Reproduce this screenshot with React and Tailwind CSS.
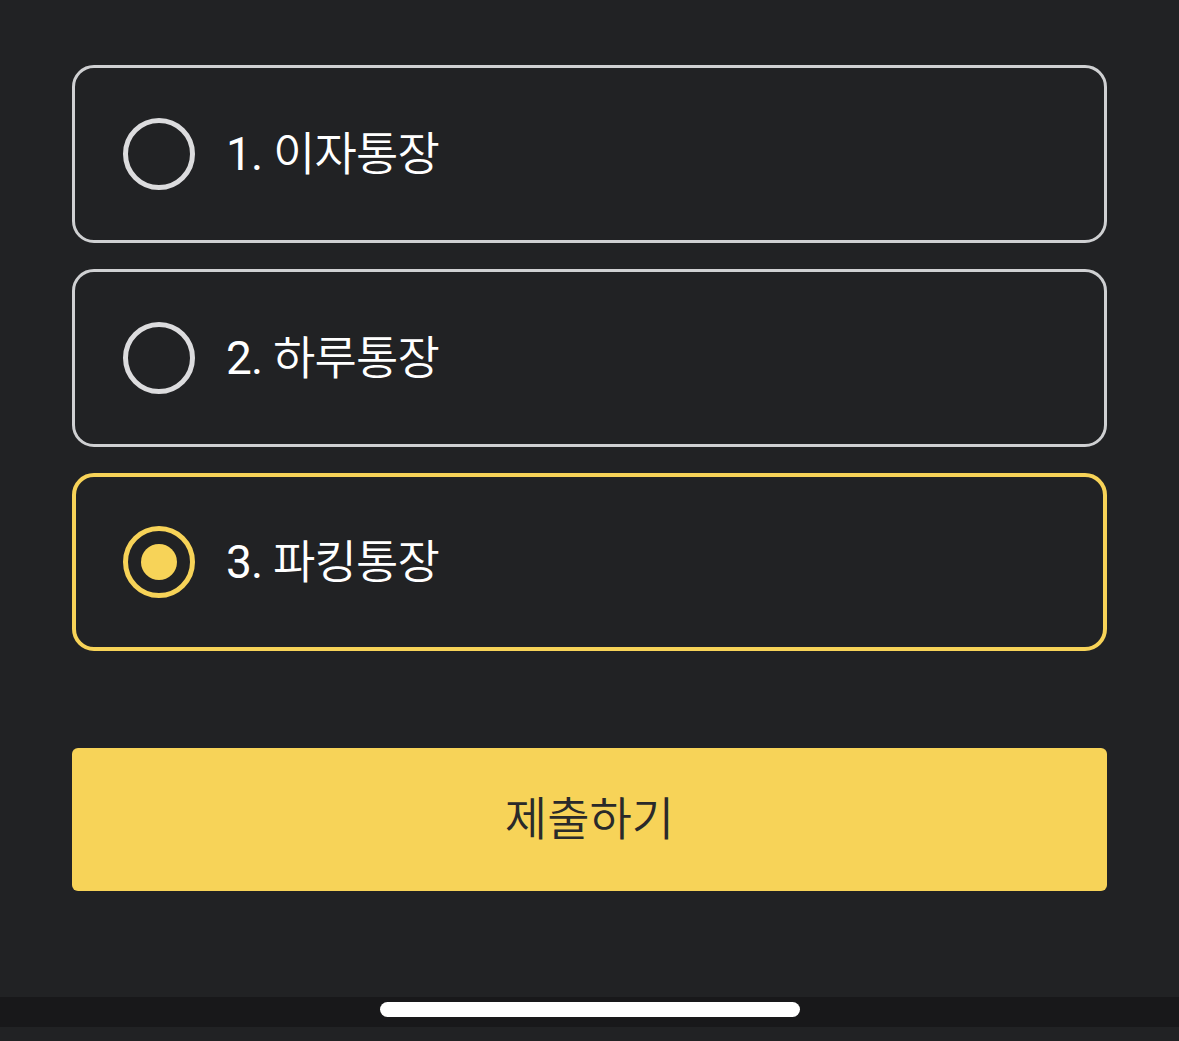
import React, { useState } from 'react'

const options = [
    { id: 1, num: '1.', label: '이자통장' },
    { id: 2, num: '2.', label: '하루통장' },
    { id: 3, num: '3.', label: '파킹통장' },
]

const Radio = ({ checked }) => (
    <div
        className={`w-[72px] h-[72px] rounded-full flex items-center justify-center shrink-0 border-[5px] ${
            checked ? 'border-[#f7d358]' : 'border-[#dcdcde]'
        }`}
    >
        {checked && <div className="w-[36px] h-[36px] rounded-full bg-[#f7d358]" />}
    </div>
)

const App = () => {
    const [selected, setSelected] = useState(3)

    return (
        <div
            className="w-[1179px] h-[1041px] bg-[#212224] flex flex-col overflow-hidden"
            style={{ fontFamily: "Roboto, 'Noto Sans CJK KR', sans-serif" }}
        >
            {/* OPTIONS */}
            <div className="flex flex-col gap-[26px] px-[72px] pt-[65px]">
                {options.map((opt) => {
                    const checked = selected === opt.id
                    return (
                        <button
                            key={opt.id}
                            onClick={() => setSelected(opt.id)}
                            className={`h-[178px] w-full rounded-[22px] flex items-center gap-[31px] text-left ${
                                checked
                                    ? 'border-[4px] border-[#f7d358] pl-[47px]'
                                    : 'border-[3px] border-[#cfd0d2] pl-[48px]'
                            }`}
                        >
                            <Radio checked={checked} />
                            <span className="text-white text-[46px] leading-none tracking-[-0.8px]">
                                <span className="font-normal">{opt.num} </span>
                                <span className="font-[350]">{opt.label}</span>
                            </span>
                        </button>
                    )
                })}
            </div>

            {/* SUBMIT */}
            <div className="px-[72px] mt-[97px]">
                <button className="w-full h-[143px] rounded-[6px] bg-[#f7d358] text-[#2a2a2a] text-[46px] font-[350] flex items-center justify-center">
                    제출하기
                </button>
            </div>

            {/* HOME INDICATOR */}
            <div className="mt-auto mb-[14px] h-[30px] bg-[#18181a] flex justify-center pt-[5px]">
                <div className="w-[420px] h-[15px] rounded-full bg-white" />
            </div>
        </div>
    )
}

export default App
